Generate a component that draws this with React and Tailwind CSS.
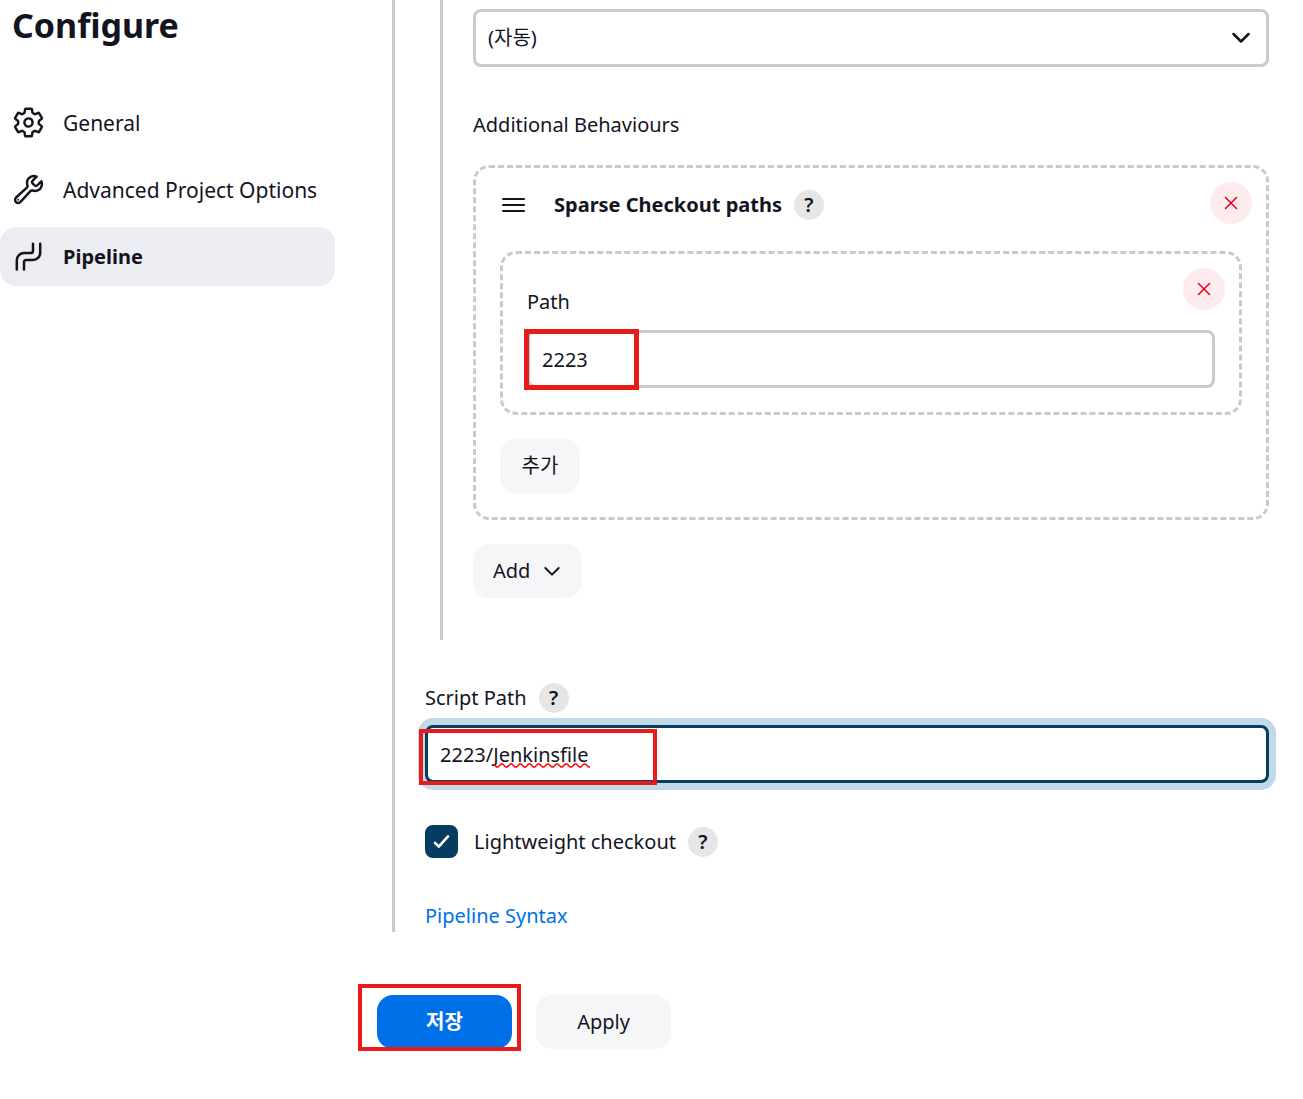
import React, { useState } from 'react';
import { IoSettingsOutline, IoBuildOutline } from 'react-icons/io5';

function PipelineIcon({ className }) {
  return (
    <svg viewBox="0 0 30 30" fill="none" stroke="currentColor" strokeWidth="2.5" strokeLinecap="round" className={className}>
      <path d="M2.8 27.5V18.3A7.2 7.2 0 0 1 10 11.1H16.6A2.4 2.4 0 0 0 19 8.7V1.8" />
      <path d="M10 27.5V20.3A2.4 2.4 0 0 1 12.4 17.9H19A7.2 7.2 0 0 0 26.2 10.7V1.8" />
    </svg>
  );
}

function Chevron({ className }) {
  return (
    <svg viewBox="0 0 18 12" fill="none" stroke="currentColor" strokeLinecap="round" strokeLinejoin="round" className={className}>
      <path d="M1.5 2L9 9.5L16.5 2" />
    </svg>
  );
}

const NAV = [
  { label: 'General', Icon: IoSettingsOutline, iconClass: 'size-[33px] [&_path]:stroke-[38px]' },
  { label: 'Advanced Project Options', Icon: IoBuildOutline, iconClass: 'size-[33px] [&_path]:stroke-[38px]' },
  { label: 'Pipeline', Icon: PipelineIcon, iconClass: 'size-[30px]' },
];

const FIELD = 'block w-full h-[58px] px-3 rounded-lg border-[3px] bg-white outline-none';

export default function App() {
  const [active, setActive] = useState('Pipeline');
  const [sparsePath, setSparsePath] = useState('2223');
  const [scriptPath, setScriptPath] = useState('2223/Jenkinsfile');
  const [lightweight, setLightweight] = useState(true);

  return (
    <div className="flex gap-[42px] min-h-screen bg-white text-[#14141f] text-[20px] leading-8 font-['Noto_Sans','Noto_Sans_CJK_KR',sans-serif]">
      <aside className="w-[335px] shrink-0">
        <h1 className="pl-3 text-[34px] leading-[50px] font-bold">Configure</h1>
        <nav className="mt-[43px] flex flex-col gap-2">
          {NAV.map(({ label, Icon, iconClass }) => (
            <a
              key={label}
              href="#"
              onClick={(e) => { e.preventDefault(); setActive(label); }}
              className={`flex items-center gap-[18px] h-[59px] pl-3 rounded-2xl ${active === label ? 'bg-[#ecedf3] font-bold' : 'text-[21px]'}`}
            >
              <span className="w-[33px] flex justify-center shrink-0"><Icon className={iconClass} /></span>
              <span>{label}</span>
            </a>
          ))}
        </nav>
      </aside>

      <form onSubmit={(e) => e.preventDefault()} className="flex-1 min-w-0 pr-[34px]">
        <div className="ml-[15px] pl-[30px] border-l-[3px] border-[#c3ccd1]">
          <div className="ml-[15px] pl-[30px] pt-[9px] pb-[42px] border-l-[3px] border-[#c3ccd1]">
            <div className="relative">
              <select aria-label="Repository browser" className={`${FIELD} appearance-none border-[#c3ccd1]`}>
                <option>(자동)</option>
              </select>
              <Chevron className="absolute right-[19px] top-[23px] w-[18px] h-3 stroke-[2.5] pointer-events-none" />
            </div>

            <div className="mt-[42px] mb-6">Additional Behaviours</div>

            <div className="p-3.5 pb-6 rounded-2xl border-[3px] border-dashed border-[#c3ccd1]">
              <div className="flex items-center justify-between pl-3">
                <div className="flex items-center pt-1">
                  <DragHandle />
                  <span className="ml-[29px] mr-3 font-bold">Sparse Checkout paths</span>
                  <Help topic="Sparse Checkout paths" />
                </div>
                <RemoveButton />
              </div>

              <div className="mx-2.5 mt-[27px] p-3.5 pb-6 rounded-2xl border-[3px] border-dashed border-[#c3ccd1]">
                <div className="flex items-start justify-between pl-2.5 mb-3">
                  <label htmlFor="sparse-path" className="pt-[18px]">Path</label>
                  <RemoveButton />
                </div>
                <div className="relative mx-2.5">
                  <input
                    id="sparse-path"
                    type="text"
                    value={sparsePath}
                    onChange={(e) => setSparsePath(e.target.value)}
                    className={`${FIELD} border-[#c3ccd1]`}
                  />
                  <div className="absolute -left-[3px] -top-px w-[115px] h-[61px] border-[5px] border-[#e81b1b] pointer-events-none" />
                </div>
              </div>

              <button type="button" className="block ml-2.5 mt-6 w-20 h-[54px] rounded-2xl bg-[#f6f6f9]">추가</button>
            </div>

            <button type="button" className="flex items-center gap-3.5 mt-6 h-[54px] pl-5 pr-[22px] rounded-2xl bg-[#f6f6f9]">
              Add
              <Chevron className="w-4 h-[11px] stroke-[2.2]" />
            </button>
          </div>

          <div className="flex items-center gap-3 mt-[43px] mb-3 h-[30px]">
            <label htmlFor="script-path">Script Path</label>
            <Help topic="Script Path" />
          </div>
          <div className="relative">
            <input
              id="script-path"
              type="text"
              spellCheck="false"
              value={scriptPath}
              onChange={(e) => setScriptPath(e.target.value)}
              className={`${FIELD} border-[#053d61] ring-[7px] ring-[#c2d9e7]`}
            />
            <Squiggle className="absolute left-[69px] top-[38px] w-[96px] h-[5px] pointer-events-none" />
            <div className="absolute -left-1.5 top-1 w-[238px] h-[56px] border-4 border-[#e81b1b] pointer-events-none" />
          </div>

          <div className="flex items-center mt-[42px] h-[33px]">
            <span className="relative size-[33px] shrink-0">
              <input
                id="lightweight"
                type="checkbox"
                checked={lightweight}
                onChange={(e) => setLightweight(e.target.checked)}
                className="block size-[33px] appearance-none rounded-lg border-[3px] border-[#053d61] checked:bg-[#053d61]"
              />
              {lightweight && (
                <svg viewBox="0 0 33 33" fill="none" stroke="white" strokeWidth="2.6" strokeLinecap="round" strokeLinejoin="round" className="absolute inset-0 pointer-events-none">
                  <path d="M10 17.8L13.8 21.6L23 11.4" />
                </svg>
              )}
            </span>
            <label htmlFor="lightweight" className="ml-4 mr-3">Lightweight checkout</label>
            <Help topic="Lightweight checkout" />
          </div>

          <div className="mt-[42px]">
            <a href="#" className="text-[#0071e8]">Pipeline Syntax</a>
          </div>
        </div>

        <div className="flex gap-6 mt-[63px] pb-[50px]">
          <div className="relative">
            <button type="submit" className="block w-[135px] h-[54px] rounded-2xl bg-[#0070e8] text-white font-bold">저장</button>
            <div className="absolute -left-[19px] -top-[11px] w-[163px] h-[67px] border-4 border-[#e81b1b] pointer-events-none" />
          </div>
          <button type="button" className="w-[135px] h-[54px] rounded-2xl bg-[#f6f6f9]">Apply</button>
        </div>
      </form>
    </div>
  );
}

function DragHandle() {
  return (
    <svg viewBox="0 0 23 14" fill="none" stroke="currentColor" strokeWidth="2" strokeLinecap="round" className="w-[23px] h-3.5 shrink-0">
      <path d="M1 1H22M1 7H22M1 13H22" />
    </svg>
  );
}

function Help({ topic }) {
  return (
    <button type="button" aria-label={`Help for ${topic}`} className="flex items-center justify-center size-[30px] shrink-0 rounded-full bg-[#e6e6e7] leading-none font-semibold">
      ?
    </button>
  );
}

function RemoveButton() {
  return (
    <button type="button" aria-label="Remove" className="flex items-center justify-center size-[42px] shrink-0 rounded-full bg-[#fdebed] text-[#e6001f]">
      <svg viewBox="0 0 14 14" fill="none" stroke="currentColor" strokeWidth="1.5" strokeLinecap="round" className="size-3.5">
        <path d="M1.5 1.5L12.5 12.5M12.5 1.5L1.5 12.5" />
      </svg>
    </button>
  );
}

// spell checker underline
function Squiggle({ className }) {
  return (
    <svg viewBox="0 0 96 5" fill="none" stroke="#f00" strokeWidth="1.5" className={className}>
      <path d="M0 1L2.5 4H4L7.2 1H8.6L11.8 4H13.2L16.4 1H17.8L21 4H22.4L25.6 1H27L30.2 4H31.6L34.8 1H36.2L39.4 4H40.8L44 1H45.4L48.6 4H50L53.2 1H54.6L57.8 4H59.2L62.4 1H63.8L67 4H68.4L71.6 1H73L76.2 4H77.6L80.8 1H82.2L85.4 4H86.8L90 1H91.4L94.6 4H96" />
    </svg>
  );
}
